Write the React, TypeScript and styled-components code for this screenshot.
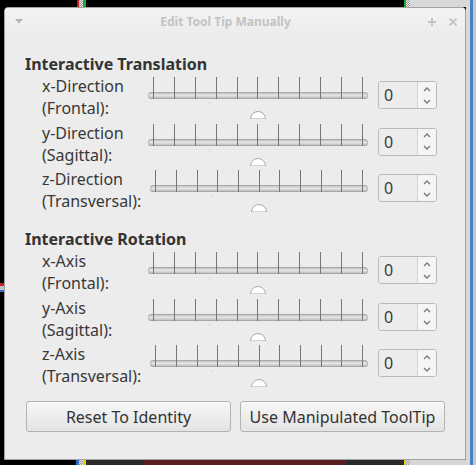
import React from 'react';
import styled, { createGlobalStyle } from 'styled-components';

const Global = createGlobalStyle`
  html, body { margin: 0; padding: 0; background: #000; }
  body { width: 476px; height: 465px; overflow: hidden; font-family: "Noto Sans", "Open Sans", sans-serif; }
`;

const Desktop = styled.div`
  width: 476px;
  height: 465px;
  display: grid;
  grid-template-columns: 4px 462px 10px;
  grid-template-rows: 7px 453px 5px;
  grid-template-areas:
    "top top right"
    "left win right"
    "bottom bottom right";
  background: #000;
`;

const Strip = styled.div<{ $area: string; $dir?: 'row' | 'column' }>`
  grid-area: ${(p) => p.$area};
  display: flex;
  flex-direction: ${(p) => p.$dir ?? 'row'};
  overflow: hidden;
`;

const Seg = styled.div<{ $size?: number; $c: string; $dotted?: boolean }>`
  flex: ${(p) => (p.$size ? `0 0 ${p.$size}px` : '1 1 auto')};
  background: ${(p) =>
    p.$dotted
      ? `repeating-conic-gradient(#e6e6e6 0% 25%, #9a9a9a 0% 50%) 0 0 / 2px 2px`
      : p.$c};
`;

const Window = styled.div`
  grid-area: win;
  display: flex;
  flex-direction: column;
  background: #ececec;
  border: 1px solid #a2a2a2;
  border-radius: 4px 4px 0 0;
  overflow: hidden;
`;

const TitleBar = styled.div`
  height: 27px;
  flex: 0 0 27px;
  display: flex;
  align-items: center;
  padding: 0 8px 0 10px;
  background: linear-gradient(#f3f3f3, #ececec);
`;

const TitleText = styled.div`
  flex: 1;
  text-align: center;
  font-size: 12px;
  font-weight: 700;
  color: #c3c3c3;
  white-space: nowrap;
`;

const TitleIcons = styled.div`
  display: flex;
  align-items: center;
  gap: 13px;
`;

const Content = styled.div`
  flex: 1;
  display: flex;
  flex-direction: column;
  padding: 18px 20px 27px 20px;
`;

const Section = styled.div<{ $top?: number }>`
  display: flex;
  flex-direction: column;
  margin-top: ${(p) => p.$top ?? 0}px;
  padding-right: 8px;
`;

const Heading = styled.div`
  font-size: 16px;
  line-height: 22px;
  font-weight: 700;
  color: #333;
  white-space: nowrap;
`;

const Rows = styled.div`
  display: flex;
  flex-direction: column;
  gap: 2.5px;
  padding-left: 17px;
`;

const Row = styled.div`
  display: flex;
  align-items: flex-start;
  height: 44px;
`;

const Label = styled.div`
  min-width: 97px;
  font-size: 16px;
  line-height: 22px;
  color: #383838;
  white-space: nowrap;
`;

const SliderBox = styled.div`
  position: relative;
  flex: 1;
  height: 44px;
  margin-left: 9px;
`;

const Groove = styled.div`
  position: absolute;
  left: 0;
  right: 0;
  top: 17px;
  height: 7px;
  border-radius: 4px;
  background: linear-gradient(#b5b6b4, #d9dad8 35%, #e3e4e2 50%, #cfd0ce 70%, #b3b4b2);
  box-shadow: inset 0 0 0 1px rgba(150, 152, 148, 0.5);
`;

const Ticks = styled.div`
  position: absolute;
  left: 5px;
  right: 5px;
  top: 2px;
  height: 22px;
  display: flex;
  justify-content: space-between;
`;

const Tick = styled.div`
  width: 1px;
  height: 22px;
  background: #767676;
`;

const Mark = styled.div`
  position: absolute;
  left: 61px;
  top: 27px;
  width: 1px;
  height: 2px;
  background: #cfcfcf;
`;

const Handle = styled.svg`
  position: absolute;
  left: 50%;
  top: 36px;
  margin-left: -8px;
`;

const Spin = styled.div`
  display: flex;
  margin: 6px 0 0 10px;
  width: 59px;
  height: 28px;
  border: 1px solid #bababa;
  border-radius: 3px;
  box-sizing: border-box;
  overflow: hidden;
`;

const SpinValue = styled.div`
  flex: 1;
  display: flex;
  align-items: center;
  padding-left: 5px;
  font-size: 16px;
  color: #3a3a3a;
  background: #ececec;
`;

const SpinArrows = styled.div`
  width: 18px;
  display: flex;
  flex-direction: column;
  border-left: 1px solid #d2d2d2;
  background: #f5f5f5;
`;

const ArrowCell = styled.div`
  flex: 1;
  display: flex;
  align-items: center;
  justify-content: center;
`;

const Buttons = styled.div`
  display: flex;
  gap: 9px;
  margin-top: 14px;
  padding-left: 1px;
`;

const Button = styled.button`
  flex: 1;
  height: 31px;
  border: 1px solid #b3b3b3;
  border-radius: 3px;
  background: linear-gradient(#f7f7f7, #e3e3e3);
  font-family: "Noto Sans", "Open Sans", sans-serif;
  font-size: 16px;
  color: #333;
  padding: 0;
  cursor: default;
`;

const Slider: React.FC = () => (
  <SliderBox>
    <Groove />
    <Ticks>
      {Array.from({ length: 11 }).map((_, i) => (
        <Tick key={i} />
      ))}
    </Ticks>
    <Mark />
    <Handle width="16" height="8" viewBox="0 0 16 8">
      <path d="M0.5 8 A7.5 7.5 0 0 1 15.5 8 Z" fill="#fff" stroke="#a9a9a9" strokeWidth="1" />
    </Handle>
  </SliderBox>
);

const SpinBox: React.FC = () => (
  <Spin>
    <SpinValue>0</SpinValue>
    <SpinArrows>
      <ArrowCell>
        <svg width="8" height="6" viewBox="0 0 8 6">
          <polyline points="1,5 4,2 7,5" fill="none" stroke="#7b7b7b" strokeWidth="1.4" />
        </svg>
      </ArrowCell>
      <ArrowCell>
        <svg width="8" height="6" viewBox="0 0 8 6">
          <polyline points="1,1 4,4 7,1" fill="none" stroke="#7b7b7b" strokeWidth="1.4" />
        </svg>
      </ArrowCell>
    </SpinArrows>
  </Spin>
);

const ControlRow: React.FC<{ a: string; b: string }> = ({ a, b }) => (
  <Row>
    <Label>
      {a}
      <br />
      {b}
    </Label>
    <Slider />
    <SpinBox />
  </Row>
);

export default function App() {
  return (
    <>
      <Global />
      <Desktop>
        <Strip $area="top">
          <Seg $size={77} $c="#000" />
          <Seg $size={2} $c="#d01818" />
          <Seg $size={4} $c="#ccc" $dotted />
          <Seg $size={3} $c="#1fae2a" />
          <Seg $size={318} $c="#000" />
          <Seg $size={2} $c="#1fae2a" />
          <Seg $size={4} $c="#ccc" $dotted />
          <Seg $c="#d8d8d8" />
        </Strip>
        <Strip $area="left" $dir="column">
          <Seg $size={276} $c="#000" />
          <Seg $size={3} $c="#c82020" />
          <Seg $size={4} $c="#ccc" $dotted />
          <Seg $size={2} $c="#2a6fd0" />
          <Seg $c="#000" />
        </Strip>
        <Strip $area="right">
          <Seg $size={4} $c="#d9d9d9" />
          <Seg $size={3} $c="#4a80c4" />
          <Seg $c="#c9c9c9" />
        </Strip>
        <Strip $area="bottom">
          <Seg $size={76} $c="#000" />
          <Seg $size={3} $c="#2a6fd0" />
          <Seg $size={4} $c="#ccc" $dotted />
          <Seg $size={3} $c="#e2d400" />
          <Seg $size={58} $c="#2a2a2a" />
          <Seg $size={202} $c="#5a1e20" />
          <Seg $size={58} $c="#2a2a2a" />
          <Seg $size={2} $c="#e2d400" />
          <Seg $size={4} $c="#ccc" $dotted />
          <Seg $c="#d6d6d6" />
        </Strip>
        <Window>
          <TitleBar>
            <svg width="8" height="5" viewBox="0 0 8 5">
              <polygon points="0,0 8,0 4,4.5" fill="#b5b5b5" />
            </svg>
            <TitleText>Edit Tool Tip Manually</TitleText>
            <TitleIcons>
              <svg width="8" height="8" viewBox="0 0 8 8">
                <path d="M4 0 V8 M0 4 H8" stroke="#c4c4c4" strokeWidth="2" />
              </svg>
              <svg width="8" height="8" viewBox="0 0 8 8">
                <path d="M0.5 0.5 L7.5 7.5 M7.5 0.5 L0.5 7.5" stroke="#c4c4c4" strokeWidth="1.8" />
              </svg>
            </TitleIcons>
          </TitleBar>
          <Content>
            <Section>
              <Heading>Interactive Translation</Heading>
              <Rows>
                <ControlRow a="x-Direction" b="(Frontal):" />
                <ControlRow a="y-Direction" b="(Sagittal):" />
                <ControlRow a="z-Direction" b="(Transversal):" />
              </Rows>
            </Section>
            <Section $top={16}>
              <Heading>Interactive Rotation</Heading>
              <Rows>
                <ControlRow a="x-Axis" b="(Frontal):" />
                <ControlRow a="y-Axis" b="(Sagittal):" />
                <ControlRow a="z-Axis" b="(Transversal):" />
              </Rows>
            </Section>
            <Buttons>
              <Button>Reset To Identity</Button>
              <Button>Use Manipulated ToolTip</Button>
            </Buttons>
          </Content>
        </Window>
      </Desktop>
    </>
  );
}
